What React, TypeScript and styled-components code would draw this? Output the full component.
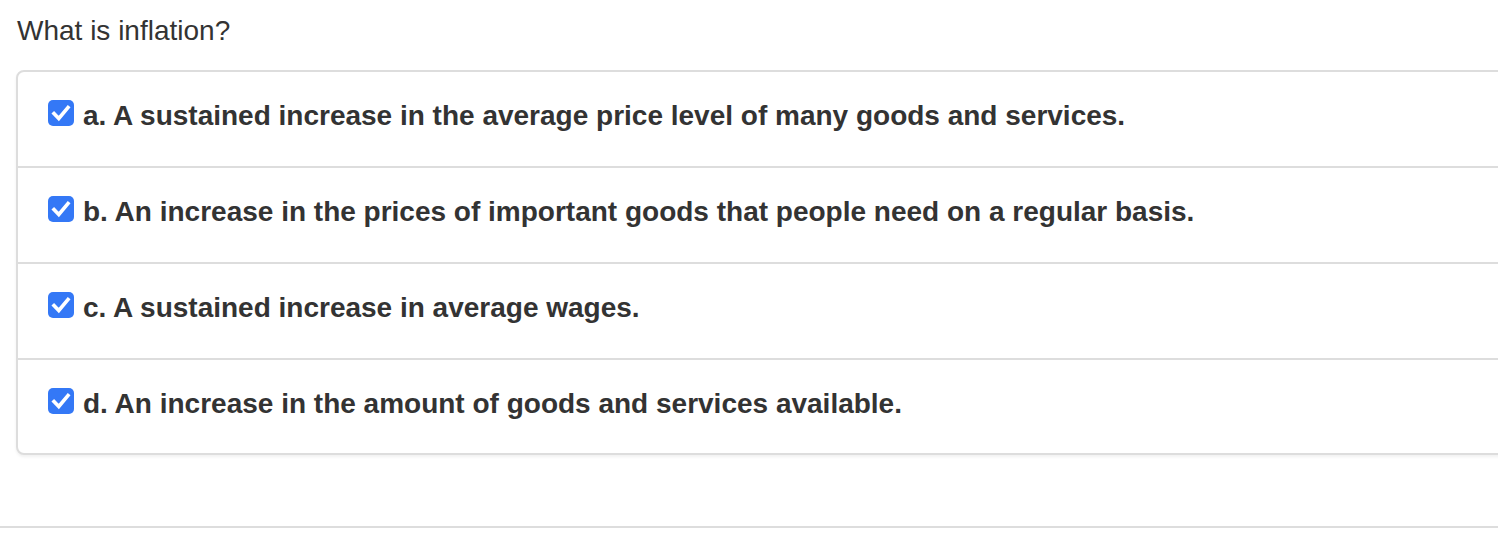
import React from 'react';
import styled, { createGlobalStyle } from 'styled-components';

const answers = [
  'a. A sustained increase in the average price level of many goods and services.',
  'b. An increase in the prices of important goods that people need on a regular basis.',
  'c. A sustained increase in average wages.',
  'd. An increase in the amount of goods and services available.',
];

export default function App() {
  return (
    <>
      <GlobalStyle />
      <Page>
        <Question>What is inflation?</Question>
        <Card>
          {answers.map((text) => (
            <Row key={text}>
              <Box>
                <svg width="26" height="26" viewBox="0 0 26 26">
                  <rect x="0" y="0" width="26" height="26" rx="5" fill="#3478f6" />
                  <path d="M6 13.5 L10.8 18.5 L20 7.5" stroke="#fff" strokeWidth="3.6" fill="none" strokeLinecap="square" strokeLinejoin="miter" />
                </svg>
              </Box>
              <Label>{text}</Label>
            </Row>
          ))}
        </Card>
      </Page>
      <Rule />
    </>
  );
}

const GlobalStyle = createGlobalStyle`
  html, body {
    margin: 0;
    padding: 0;
    background: #fff;
    overflow: hidden;
  }
  body {
    font-family: "Liberation Sans", Arial, sans-serif;
    color: #333;
  }
`;

const Page = styled.div`
  padding: 11px 0 0 16px;
  height: 526px;
  box-sizing: border-box;
  overflow: hidden;
`;

const Question = styled.div`
  font-size: 28px;
  line-height: 40px;
  margin-left: 1px;
  margin-bottom: 19px;
`;

const Card = styled.div`
  border: 2px solid #ddd;
  border-radius: 8px;
  margin-right: -40px;
  box-shadow: 0 2px 3px rgba(0, 0, 0, 0.06);
  background: #fff;
`;

const Row = styled.div`
  display: flex;
  align-items: flex-start;
  gap: 9px;
  padding: 24px 30px 30px 30px;
  & + & {
    border-top: 2px solid #ddd;
  }
  &:last-child {
    padding-bottom: 29px;
  }
`;

const Box = styled.div`
  display: flex;
  margin-top: 4px;
  flex: none;
`;

const Label = styled.div`
  font-size: 28px;
  line-height: 40px;
  font-weight: bold;
  white-space: nowrap;
`;

const Rule = styled.div`
  height: 2px;
  background: #ddd;
`;
